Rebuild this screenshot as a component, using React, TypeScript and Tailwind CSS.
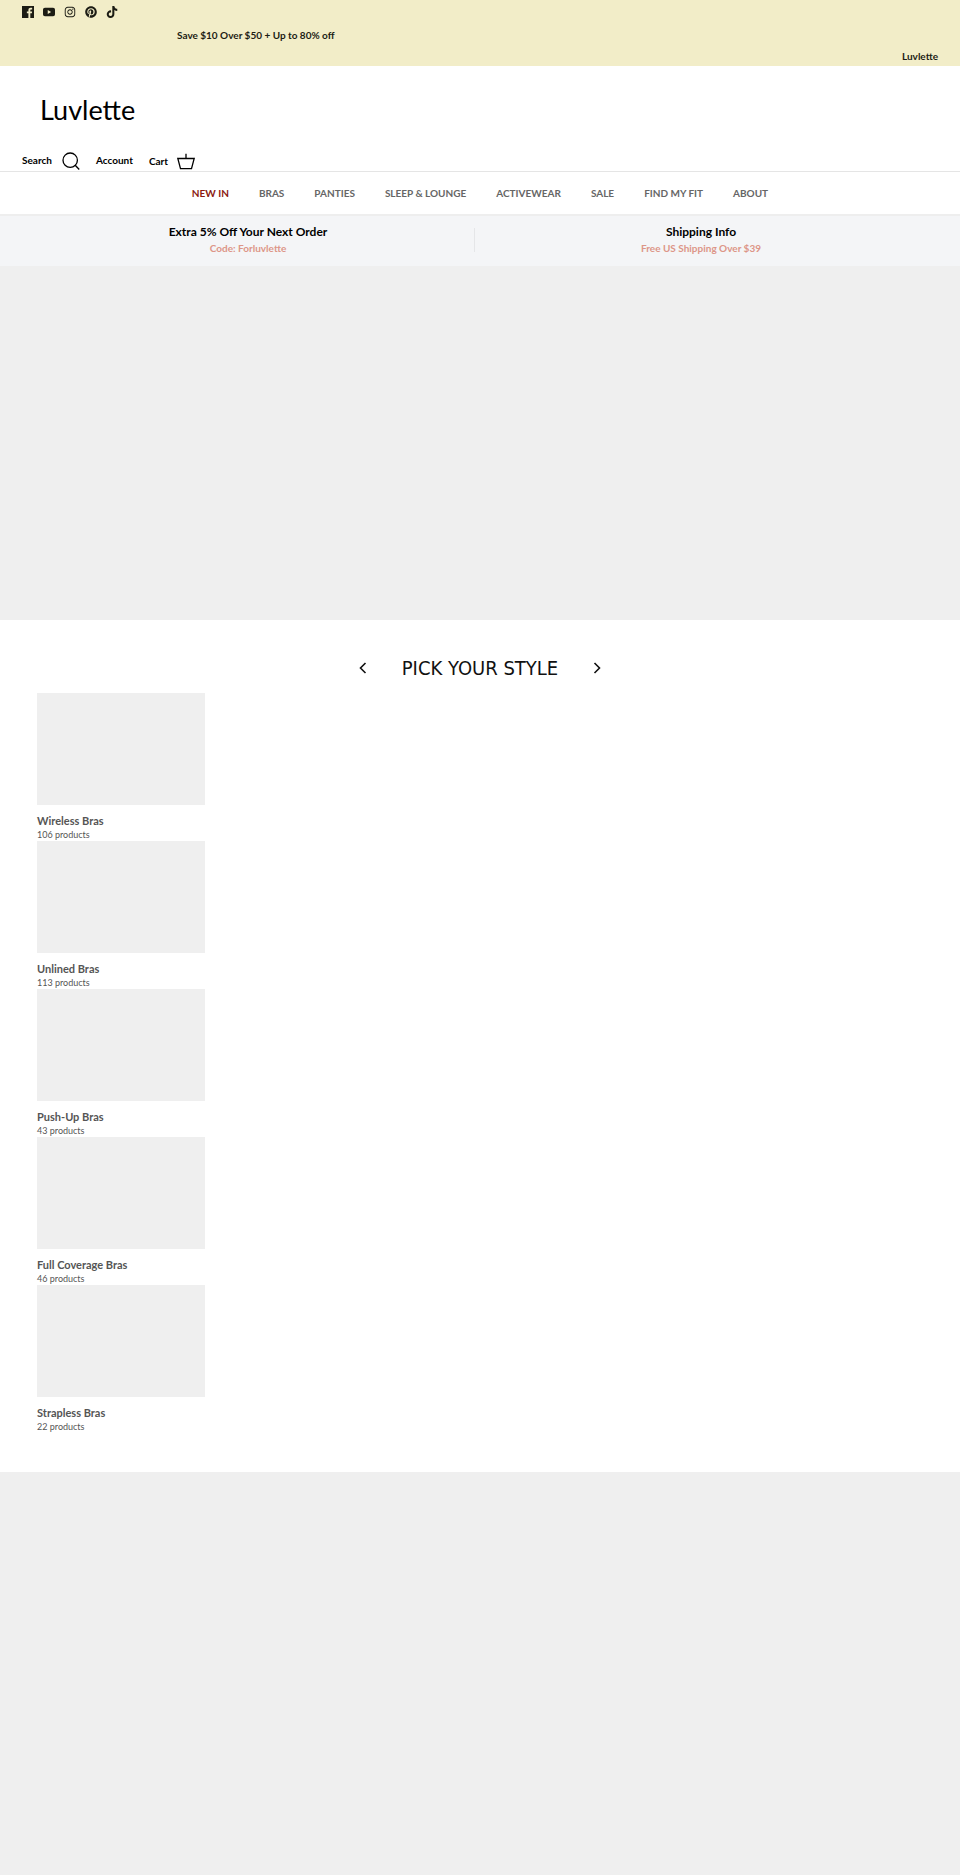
import React from 'react';
import { FaPinterest, FaTiktok, FaInstagram } from 'react-icons/fa6';

interface NavItem {
    label: string;
    highlight?: boolean;
}

interface Collection {
    title: string;
    count: number;
}

const navItems: NavItem[] = [
    { label: 'NEW IN', highlight: true },
    { label: 'BRAS' },
    { label: 'PANTIES' },
    { label: 'SLEEP & LOUNGE' },
    { label: 'ACTIVEWEAR' },
    { label: 'SALE' },
    { label: 'FIND MY FIT' },
    { label: 'ABOUT' },
];

const collections: Collection[] = [
    { title: 'Wireless Bras', count: 106 },
    { title: 'Unlined Bras', count: 113 },
    { title: 'Push-Up Bras', count: 43 },
    { title: 'Full Coverage Bras', count: 46 },
    { title: 'Strapless Bras', count: 22 },
];

const FacebookIcon = () => (
    <svg viewBox="0 0 24 24" className="size-3" fill="currentColor" aria-hidden="true">
        <path d="M0 0h24v24h-7.4v-9.3h3.1l.5-3.6h-3.6V8.800c0-1 .3-1.750 1.800-1.750h1.900V3.800c-.3 0-1.500-.15-2.800-.15-2.800 0-4.700 1.700-4.700 4.800v2.650H9.700v3.600h3.100V24H0z" />
    </svg>
);

const YoutubeIcon = () => (
    <svg viewBox="0 0 24 24" className="size-3" fill="currentColor" aria-hidden="true">
        <path d="M4 3.500C1.500 3.600 0 5 0 8v8c0 3 1.500 4.400 4 4.500 5 .3 11 .3 16 0 2.500-.1 4-1.500 4-4.500V8c0-3-1.500-4.400-4-4.500-5-.3-11-.3-16 0zM9.500 8l6.700 4-6.700 4z" />
    </svg>
);

const socials = [
    { name: 'Facebook', icon: <FacebookIcon /> },
    { name: 'YouTube', icon: <YoutubeIcon /> },
    { name: 'Instagram', icon: <FaInstagram className="size-3" /> },
    { name: 'Pinterest', icon: <FaPinterest className="size-3" /> },
    { name: 'TikTok', icon: <FaTiktok className="size-3" /> },
];

const AnnouncementBar = () => (
    <div className="bg-[#f2edc8] text-[#1c1c14] text-[10px] leading-4 font-bold px-[22px] pt-1.5 pb-0.5">
        <ul className="flex gap-[9px]">
            {socials.map((s) => (
                <li key={s.name}>
                    <a href="#" aria-label={s.name} className="block">
                        {s.icon}
                    </a>
                </li>
            ))}
        </ul>
        <p className="mt-[9px] pl-[155px]">Save $10 Over $50 + Up to 80% off</p>
        <div className="mt-[5px] flex justify-end">
            <a href="#">Luvlette</a>
        </div>
    </div>
);

const Header = () => (
    <header>
        <div className="pl-10 pt-6">
            <a href="#" className="inline-block text-[27px] leading-10 text-black">
                Luvlette
            </a>
        </div>
        <div className="mt-[22px] flex items-start gap-4 px-[22px] text-[10px] leading-4 font-bold text-black">
            <button type="button" className="flex items-start gap-2.5">
                Search
                <svg viewBox="0 0 18 18" className="size-[18px]" fill="none" stroke="currentColor" strokeWidth="1.3" aria-hidden="true">
                    <circle cx="8.200" cy="8.200" r="7.200" />
                    <path d="M13.200 13.200l4 4.300" />
                </svg>
            </button>
            <a href="#">Account</a>
            <a href="#" className="flex items-start gap-2 pt-px">
                Cart
                <svg viewBox="0 0 20 18" className="h-[18px] w-5" fill="none" stroke="currentColor" strokeWidth="1.3" aria-hidden="true">
                    <path d="M1.800 5.500h16.400l-2.700 10.200H4.500zM10 .8V5.500" />
                </svg>
            </a>
        </div>
        <nav className="border-t border-[#e5e5e5]">
            <ul className="flex justify-center gap-[30px] text-[10px] leading-[42px] font-bold text-[#666]">
                {navItems.map((item) => (
                    <li key={item.label}>
                        <a href="#" className={item.highlight ? 'text-[#8b1a10]' : ''}>
                            {item.label}
                        </a>
                    </li>
                ))}
            </ul>
        </nav>
    </header>
);

const InfoBar = () => (
    <section className="flex items-center border-t-2 border-[#eee] bg-[#f4f5f7] pt-2 pb-2.5 pl-[22px] pr-[33px] text-center font-bold">
        <div className="flex-1">
            <h3 className="text-xs leading-4 text-black">Extra 5% Off Your Next Order</h3>
            <p className="text-[10px] leading-4 text-[#dd9688]">Code: Forluvlette</p>
        </div>
        <div className="h-6 w-px bg-[#e5e6e8]" />
        <div className="flex-1">
            <h3 className="text-xs leading-4 text-black">Shipping Info</h3>
            <p className="text-[10px] leading-4 text-[#dd9688]">Free US Shipping Over $39</p>
        </div>
    </section>
);

const CollectionList = () => (
    <section className="px-[37px] pt-8 pb-[39px]">
        <div className="flex items-center justify-center gap-[31px]">
            <button type="button" aria-label="Previous" className="p-1">
                <svg viewBox="0 0 8 12" className="h-3 w-2" fill="none" stroke="#111" strokeWidth="1.600" aria-hidden="true">
                    <path d="M6.500 1L1.500 6l5 5" />
                </svg>
            </button>
            <h2 className="font-['DejaVu_Sans_Condensed','DejaVu_Sans',sans-serif] text-xl leading-8 text-[#111]">PICK YOUR STYLE</h2>
            <button type="button" aria-label="Next" className="p-1">
                <svg viewBox="0 0 8 12" className="h-3 w-2" fill="none" stroke="#111" strokeWidth="1.600" aria-hidden="true">
                    <path d="M1.500 1l5 5-5 5" />
                </svg>
            </button>
        </div>
        <ul className="mt-[9px]">
            {collections.map((c) => (
                <li key={c.title} className="w-42">
                    <a href="#" className="block text-[#555]">
                        <div className="h-28 bg-[#efefef]" />
                        <h3 className="mt-2 text-[11px] leading-4 font-bold">{c.title}</h3>
                        <p className="text-[9px] leading-3">{c.count} products</p>
                    </a>
                </li>
            ))}
        </ul>
    </section>
);

export default function App() {
    return (
        <div className="bg-white font-[Lato,sans-serif]">
            <AnnouncementBar />
            <Header />
            <InfoBar />
            <div className="h-[354px] bg-[#efefef]" />
            <CollectionList />
            <div className="h-[403px] bg-[#efefef]" />
        </div>
    );
}
